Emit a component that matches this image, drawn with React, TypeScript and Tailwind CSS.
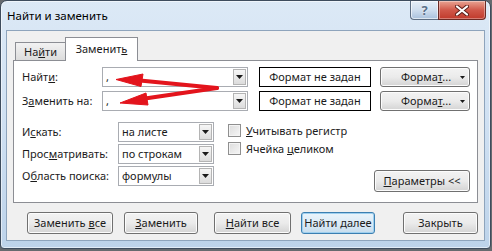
import type { ReactNode } from "react";

const Combo = ({ value, width }: { value: string; width: string }) => (
  <div
    className={`flex h-[20px] items-stretch border border-[#a9acb2] bg-white ${width}`}
  >
    <span className="flex-1 truncate pl-[3px] leading-[18px]">{value}</span>
    <span className="m-px flex w-[13px] items-center justify-center border border-[#b4b4b4] bg-linear-to-b from-[#f6f6f6] to-[#dcdcdc]">
      <svg width="7" height="4" viewBox="0 0 7 4">
        <path d="M0 0h7L3.5 4z" fill="#1a1a1a" />
      </svg>
    </span>
  </div>
);

const Button = ({
  children,
  width,
  primary = false,
}: {
  children: ReactNode;
  width: string;
  primary?: boolean;
}) => (
  <div
    className={`flex h-[22px] items-center justify-center rounded-[3px] border ${width} ${
      primary
        ? "border-[#3c7fb1] bg-linear-to-b from-[#eaf4fb] via-[#dcebf6] to-[#c8dded] shadow-[inset_0_0_0_1px_#9fd0ef]"
        : "border-[#707070] bg-linear-to-b from-[#f3f3f3] via-[#ebebeb] to-[#d4d4d4] shadow-[inset_0_0_0_1px_#fcfcfc]"
    }`}
  >
    {children}
  </div>
);

const FormatButton = () => (
  <div className="ml-[9px] flex h-[20px] w-[90px] items-center rounded-[3px] border border-[#707070] bg-linear-to-b from-[#f3f3f3] via-[#ebebeb] to-[#d4d4d4] pl-[20px] pr-[4px] shadow-[inset_0_0_0_1px_#fcfcfc]">
    <span>
      Форма<u>т</u>...
    </span>
    <svg className="ml-auto" width="5" height="3" viewBox="0 0 5 3">
      <path d="M0 0h5L2.5 3z" fill="#1a1a1a" />
    </svg>
  </div>
);

const Check = ({ children }: { children: ReactNode }) => (
  <div className="flex h-[13px] items-center gap-[5px]">
    <span className="h-[13px] w-[13px] border border-[#8f8f8f] bg-linear-to-br from-[#dcdcdc] to-[#f6f6f6] shadow-[inset_0_0_0_1px_#f4f4f4]" />
    <span className="leading-[13px]">{children}</span>
  </div>
);

const Label = ({ children, width }: { children: ReactNode; width: string }) => (
  <span className={`${width} shrink-0`}>{children}</span>
);

export default function App() {
  return (
    <div className="relative h-[251px] w-[492px] overflow-hidden bg-[#666a6f] font-['Noto_Sans',sans-serif] text-[11px] text-[#1b1b1b]">
      <div className="flex h-[249px] w-[491px] flex-col rounded-t-[7px] rounded-b-[4px] border border-[#3e4c5d] bg-linear-to-b from-[#dce9f6] via-[#cfe0f2] to-[#bdd3ea] shadow-[inset_0_0_0_1px_rgba(255,255,255,0.55)]">
        {/* title bar */}
        <div className="flex h-[29px] items-start">
          <span className="pl-[6px] pt-[7px] text-[11.5px] leading-[16px] text-black">
            Найти и заменить
          </span>
          <div className="ml-auto mr-[4px] flex">
            <div className="flex h-[19px] w-[28px] items-center justify-center rounded-bl-[4px] border border-t-0 border-r-0 border-[#5d6e82] bg-linear-to-b from-[#e6eff8] via-[#cfdeee] to-[#a9c1dc] shadow-[inset_0_0_0_1px_rgba(255,255,255,0.6)]">
              <span className="text-[13px] font-bold leading-none text-[#5a6f88] [text-shadow:0_0_2px_#fff]">
                ?
              </span>
            </div>
            <div className="flex h-[19px] w-[48px] items-center justify-center rounded-br-[4px] border border-t-0 border-[#6b2a24] bg-linear-to-b from-[#e7a393] via-[#d0584a] to-[#c0392b] shadow-[inset_0_0_0_1px_rgba(255,255,255,0.35)]">
              <svg width="14" height="11" viewBox="0 0 14 11">
                <path
                  d="M2 1.5l10 8M12 1.5l-10 8"
                  stroke="#5a1d18"
                  strokeWidth="4"
                  strokeLinecap="round"
                />
                <path
                  d="M2 1.5l10 8M12 1.5l-10 8"
                  stroke="#fff"
                  strokeWidth="2.2"
                  strokeLinecap="round"
                />
              </svg>
            </div>
          </div>
        </div>

        {/* client area */}
        <div className="mx-[5px] flex h-[211px] flex-col border border-[#8ea4bc] bg-[#f0f0f0] px-[6px] pt-[6px]">
          {/* tabs */}
          <div className="relative z-10 flex h-[23px] items-end pl-[2px]">
            <div className="flex h-[18px] w-[50px] items-center justify-center border border-b-0 border-r-0 border-[#8c8e94] bg-linear-to-b from-[#f2f2f2] to-[#dcdcdc] pt-[2px]">
              На<u>й</u>ти
            </div>
            <div className="-mb-px flex h-[24px] w-[73px] items-start justify-center border border-b-0 border-[#8c8e94] bg-white pt-[3px]">
              Заменит<u>ь</u>
            </div>
          </div>

          {/* panel */}
          <div className="flex h-[143px] flex-col border border-[#8c8e94] bg-white pl-[8px] pr-[7px] pt-[6px]">
            <div className="flex h-[20px] items-center">
              <Label width="w-[80px]">
                Найт<u>и</u>:
              </Label>
              <Combo value="," width="w-[146px]" />
              <div className="ml-[11px] flex h-[20px] w-[112px] items-center justify-center border border-black">
                Формат не задан
              </div>
              <FormatButton />
            </div>
            <div className="mt-[4px] flex h-[20px] items-center">
              <Label width="w-[80px]">
                З<u>а</u>менить на:
              </Label>
              <Combo value="," width="w-[146px]" />
              <div className="ml-[11px] flex h-[20px] w-[112px] items-center justify-center border border-black">
                Формат не задан
              </div>
              <FormatButton />
            </div>

            <div className="mt-[11px] flex items-start">
              <div className="flex flex-col gap-[2px]">
                <div className="flex h-[20px] items-center">
                  <Label width="w-[96px]">
                    И<u>с</u>кать:
                  </Label>
                  <Combo value="на листе" width="w-[96px]" />
                </div>
                <div className="flex h-[20px] items-center">
                  <Label width="w-[96px]">
                    Прос<u>м</u>атривать:
                  </Label>
                  <Combo value="по строкам" width="w-[96px]" />
                </div>
                <div className="flex h-[20px] items-center">
                  <Label width="w-[96px]">
                    О<u>б</u>ласть поиска:
                  </Label>
                  <Combo value="формулы" width="w-[96px]" />
                </div>
              </div>
              <div className="ml-[14px] flex flex-col gap-[5px] pt-[2px]">
                <Check>
                  <u>У</u>читывать регистр
                </Check>
                <Check>
                  Ячейка <u>ц</u>еликом
                </Check>
              </div>
              <div className="ml-auto mt-[48px]">
                <Button width="w-[96px]">
                  <span>
                    <u>П</u>араметры &lt;&lt;
                  </span>
                </Button>
              </div>
            </div>
          </div>

          {/* bottom buttons */}
          <div className="mt-[9px] flex pl-[14px]">
            <Button width="w-[87px]">
              <span>
                Заменить <u>в</u>се
              </span>
            </Button>
            <div className="ml-[11px]">
              <Button width="w-[74px]">
                <span>
                  <u>З</u>аменить
                </span>
              </Button>
            </div>
            <div className="ml-[16px]">
              <Button width="w-[77px]">
                <span>
                  <u>Н</u>айти все
                </span>
              </Button>
            </div>
            <div className="ml-[10px]">
              <Button width="w-[74px]" primary>
                <span>
                  Найти <u>д</u>алее
                </span>
              </Button>
            </div>
            <div className="ml-[28px]">
              <Button width="w-[75px]">
                <span>Закрыть</span>
              </Button>
            </div>
          </div>
        </div>
      </div>

      {/* red arrows drawn over the dialog */}
      <svg
        className="pointer-events-none absolute left-0 top-0"
        width="492"
        height="251"
        viewBox="0 0 492 251"
      >
        <g fill="#e3141c" stroke="#e3141c" strokeLinejoin="round">
          <path d="M217 88L140 80.5" strokeWidth="4" strokeLinecap="round" />
          <path d="M217 88L145 98.5" strokeWidth="4" strokeLinecap="round" />
          <path d="M116 79.5L143 74L141 86.5z" strokeWidth="1" />
          <path d="M120 103L146 93L148 105z" strokeWidth="1" />
        </g>
      </svg>
    </div>
  );
}
